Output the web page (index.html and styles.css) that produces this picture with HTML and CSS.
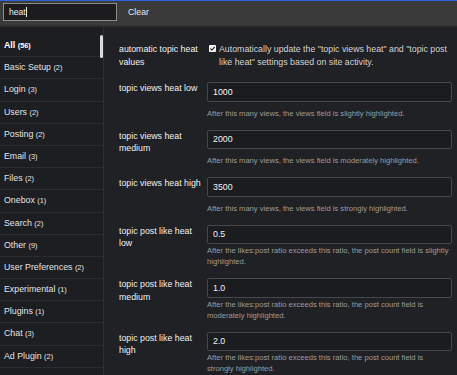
FILE: index.html
```html
<!DOCTYPE html>
<html lang="en">
<head>
<meta charset="utf-8">
<title>Settings</title>
<link rel="stylesheet" href="styles.css">
</head>
<body>
<div class="topbar">
  <div class="search"><span class="search-text">heat</span><span class="caret"></span></div>
  <button class="clear">Clear</button>
</div>
<div class="layout">
  <nav class="sidebar">
    <div class="thumb"></div>
    <ul class="cats">
      <li class="cat active">All <span class="count">(56)</span></li>
      <li class="cat">Basic Setup <span class="count">(2)</span></li>
      <li class="cat">Login <span class="count">(3)</span></li>
      <li class="cat">Users <span class="count">(2)</span></li>
      <li class="cat">Posting <span class="count">(2)</span></li>
      <li class="cat">Email <span class="count">(3)</span></li>
      <li class="cat">Files <span class="count">(2)</span></li>
      <li class="cat">Onebox <span class="count">(1)</span></li>
      <li class="cat">Search <span class="count">(2)</span></li>
      <li class="cat">Other <span class="count">(9)</span></li>
      <li class="cat">User Preferences <span class="count">(2)</span></li>
      <li class="cat">Experimental <span class="count">(1)</span></li>
      <li class="cat">Plugins <span class="count">(1)</span></li>
      <li class="cat">Chat <span class="count">(3)</span></li>
      <li class="cat">Ad Plugin <span class="count">(2)</span></li>
    </ul>
  </nav>
  <main class="settings">
    <div class="setting setting-bool">
      <div class="label">automatic topic heat values</div>
      <div class="value check-row">
        <span class="checkbox"><svg viewBox="0 0 7 7" width="7" height="7"><rect x="0" y="0" width="7" height="7" rx="0.8" fill="#f2f2f2"/><path d="M1.4 3.6 L2.9 5 L5.7 1.9" fill="none" stroke="#1a1a1a" stroke-width="1.1"/></svg></span>
        <span class="desc">Automatically update the "topic views heat" and "topic post like heat" settings based on site activity.</span>
      </div>
    </div>
    <div class="setting">
      <div class="label">topic views heat low</div>
      <div class="value">
        <input class="field" type="text" value="1000">
        <div class="help">After this many views, the views field is slightly highlighted.</div>
      </div>
    </div>
    <div class="setting">
      <div class="label">topic views heat medium</div>
      <div class="value">
        <input class="field" type="text" value="2000">
        <div class="help">After this many views, the views field is moderately highlighted.</div>
      </div>
    </div>
    <div class="setting">
      <div class="label">topic views heat high</div>
      <div class="value">
        <input class="field" type="text" value="3500">
        <div class="help">After this many views, the views field is strongly highlighted.</div>
      </div>
    </div>
    <div class="setting">
      <div class="label">topic post like heat low</div>
      <div class="value">
        <input class="field" type="text" value="0.5">
        <div class="help help-tight">After the likes:post ratio exceeds this ratio, the post count field is slightly highlighted.</div>
      </div>
    </div>
    <div class="setting">
      <div class="label">topic post like heat medium</div>
      <div class="value">
        <input class="field" type="text" value="1.0">
        <div class="help help-tight">After the likes:post ratio exceeds this ratio, the post count field is moderately highlighted.</div>
      </div>
    </div>
    <div class="setting">
      <div class="label">topic post like heat high</div>
      <div class="value">
        <input class="field" type="text" value="2.0">
        <div class="help help-tight">After the likes:post ratio exceeds this ratio, the post count field is strongly highlighted.</div>
      </div>
    </div>
  </main>
</div>
</body>
</html>
```
FILE: styles.css
```css
* { box-sizing: border-box; }
html, body {
  margin: 0;
  padding: 0;
  height: 100%;
  overflow: hidden;
}
body {
  background: #202125;
  color: #e6e6e6;
  font-family: "Liberation Sans", Arial, sans-serif;
  font-size: 8.8px;
}
.topbar {
  height: 27px;
  border-top: 1px solid #2c63d6;
  border-bottom: 2px solid #2f2f2f;
  background: #3a3a3a;
  display: flex;
  align-items: flex-start;
  padding: 2px 0 0 3px;
}
.search {
  width: 114px;
  height: 18px;
  background: #1c1c1e;
  border: 1px solid #8c8c8c;
  display: flex;
  align-items: center;
  padding-left: 5px;
  color: #f0f0f0;
  font-size: 8.6px;
}
.caret {
  display: inline-block;
  width: 1px;
  height: 10px;
  background: #f0f0f0;
  margin-left: 0.5px;
}
.clear {
  background: transparent;
  border: 0;
  color: #e8e8e8;
  font-family: inherit;
  font-size: 8.8px;
  padding: 0 0 0 11px;
  height: 18px;
  line-height: 18px;
}
.layout {
  display: grid;
  grid-template-columns: 104px 1fr;
  height: calc(100% - 27px);
}
.sidebar {
  position: relative;
  background: #1d1e22;
  border-right: 1px solid #2e2f33;
  padding-top: 8px;
}
.thumb {
  position: absolute;
  left: 100px;
  top: 8px;
  width: 3px;
  height: 23px;
  border-radius: 2px;
  background: #dcdcdc;
}
.cats {
  list-style: none;
  margin: 0;
  padding: 0;
}
.cat {
  height: 22.2px;
  line-height: 21.2px;
  border-bottom: 1px solid #2a2b2f;
  padding-left: 4px;
  color: #e2e2e2;
  white-space: nowrap;
}
.count {
  font-size: 7.4px;
}
.cat.active {
  font-weight: bold;
  color: #ffffff;
}
.settings {
  padding: 15.5px 5px 0 15px;
}
.setting {
  display: grid;
  grid-template-columns: 88px 1fr;
  margin-bottom: 11px;
}
.setting-bool {
  margin-bottom: 13.5px;
}
.label {
  color: #f0f0f0;
  line-height: 12.5px;
  padding-right: 2px;
}
.setting-bool .label {
  line-height: 13px;
}
.check-row {
  display: flex;
  align-items: flex-start;
}
.checkbox {
  display: block;
  width: 7px;
  height: 7px;
  margin: 2.5px 3px 0 2px;
  flex: none;
}
.checkbox svg { display: block; }
.desc {
  color: #d2d2d2;
  line-height: 13px;
}
.field {
  display: block;
  width: 100%;
  height: 19.5px;
  background: #1b1c1f;
  border: 1px solid #46474b;
  border-radius: 2px;
  color: #f2f2f2;
  font-family: "Liberation Sans", Arial, sans-serif;
  font-size: 8.8px;
  padding: 0 5px;
  margin: 0;
  outline: none;
}
.help {
  color: #9c9c9c;
  font-size: 7.6px;
  line-height: 11px;
  margin-top: 6px;
  padding-right: 1.5px;
}
.help-tight {
  margin-top: 1px;
}
```
